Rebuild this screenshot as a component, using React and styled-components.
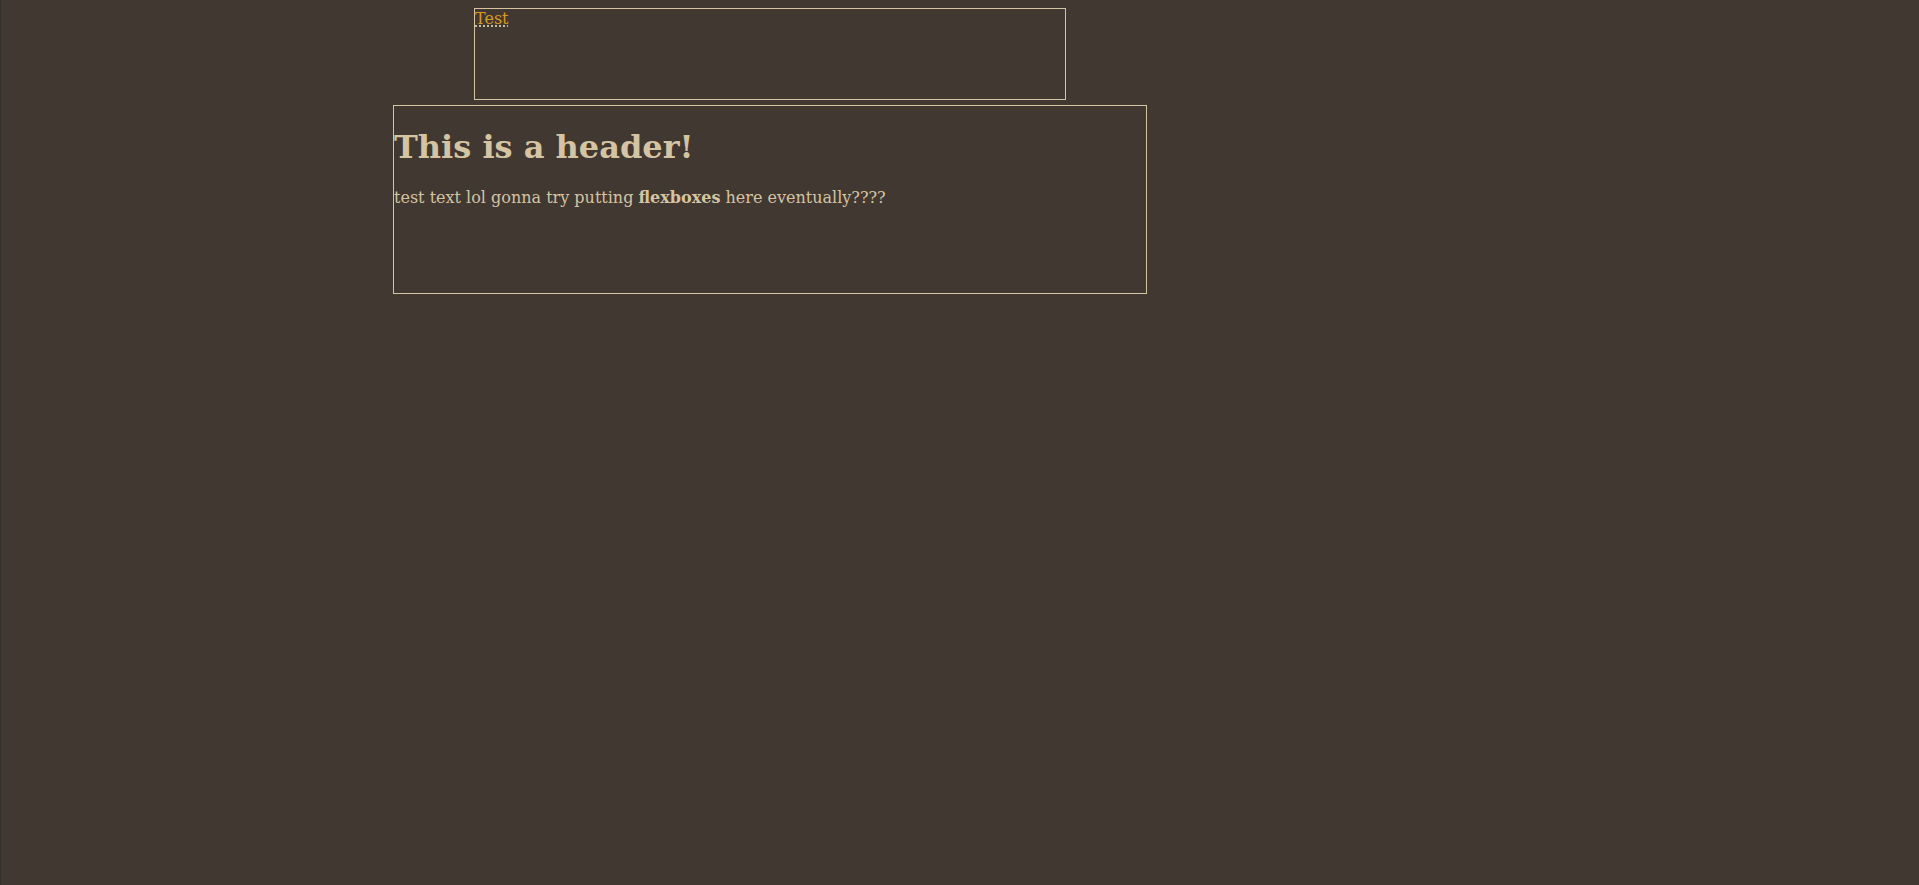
import React from "react";
import styled, { createGlobalStyle } from "styled-components";

const GlobalStyle = createGlobalStyle`
  html {
    box-sizing: border-box;
    min-height: 100%;
    background: #413832;
    border-left: 1px solid #34302c;
  }
  body {
    margin: 8px 8px 8px 7px;
    background: #413832;
    color: #d5c4a1;
    font-family: "DejaVu Serif", serif;
    font-size: 16px;
  }
`;

const Column = styled.div`
  width: 754px;
  margin-left: 385px;
  display: flex;
  flex-direction: column;
  align-items: center;
  gap: 5px;
`;

const NavBox = styled.nav`
  box-sizing: border-box;
  width: 592px;
  height: 92px;
  border: 1px solid #d5c4a1;
`;

const NavLink = styled.a`
  color: #d79921;
  text-decoration: underline dotted #ebdbb2;
  text-underline-offset: 2px;
`;

const ContentBox = styled.main`
  box-sizing: border-box;
  width: 754px;
  height: 189px;
  padding-top: 1px;
  border: 1px solid #d5c4a1;
`;

const Header = styled.h1`
  margin: 0.67em 0;
  font-size: 32px;
  font-weight: bold;
  color: #d5c4a1;
`;

const Paragraph = styled.p`
  margin: 16px 0;
  color: #d5c4a1;
`;

export default function App() {
  return (
    <>
      <GlobalStyle />
      <Column>
        <NavBox>
          <NavLink href="#">Test</NavLink>
        </NavBox>
        <ContentBox>
          <Header>This is a header!</Header>
          <Paragraph>
            test text lol gonna try putting <b>flexboxes</b> here eventually????
          </Paragraph>
        </ContentBox>
      </Column>
    </>
  );
}
